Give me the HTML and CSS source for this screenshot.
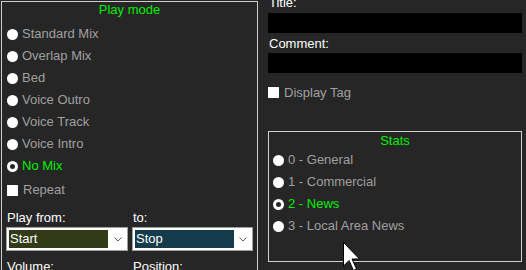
FILE: index.html
```html
<!DOCTYPE html>
<html lang="en">
<head>
    <meta charset="UTF-8">
    <meta name="viewport" content="width=device-width, initial-scale=1.0">
    <title>Cart properties</title>
    <link rel="stylesheet" href="styles.css">
</head>
<body>
    <div class="screen">
        <div class="group play-mode">
            <div class="group-title">Play mode</div>
            <div class="options">
                <div class="option"><span class="radio"></span>Standard Mix</div>
                <div class="option"><span class="radio"></span>Overlap Mix</div>
                <div class="option"><span class="radio"></span>Bed</div>
                <div class="option"><span class="radio"></span>Voice Outro</div>
                <div class="option"><span class="radio"></span>Voice Track</div>
                <div class="option"><span class="radio"></span>Voice Intro</div>
                <div class="option selected"><span class="radio"></span>No Mix</div>
            </div>
            <div class="option repeat"><span class="check"></span>Repeat</div>

            <div class="range">
                <div class="field first">
                    <div class="label">Play from:</div>
                    <div class="combo">
                        <span class="combo-value start">Start</span>
                        <span class="combo-arrow">
                            <svg width="8" height="5" viewBox="0 0 8 5"><polyline points="0.5,0.5 4,4 7.5,0.5" fill="none" stroke="#5a5a5a" stroke-width="1"/></svg>
                        </span>
                    </div>
                </div>
                <div class="field">
                    <div class="label">to:</div>
                    <div class="combo">
                        <span class="combo-value stop">Stop</span>
                        <span class="combo-arrow">
                            <svg width="8" height="5" viewBox="0 0 8 5"><polyline points="0.5,0.5 4,4 7.5,0.5" fill="none" stroke="#5a5a5a" stroke-width="1"/></svg>
                        </span>
                    </div>
                </div>
            </div>

            <div class="range lower">
                <div class="field first"><div class="label">Volume:</div></div>
                <div class="field"><div class="label">Position:</div></div>
            </div>
        </div>

        <div class="side">
            <div class="label">Title:</div>
            <div class="text-box"></div>
            <div class="label comment">Comment:</div>
            <div class="text-box"></div>
            <div class="option display-tag"><span class="check"></span>Display Tag</div>

            <div class="group stats">
                <div class="group-title">Stats</div>
                <div class="option"><span class="radio"></span>0 - General</div>
                <div class="option"><span class="radio"></span>1 - Commercial</div>
                <div class="option selected"><span class="radio"></span>2 - News</div>
                <div class="option"><span class="radio"></span>3 - Local Area News</div>
            </div>
        </div>

        <!-- mouse pointer -->
        <svg class="cursor" width="18" height="30" viewBox="0 0 18 30">
            <path d="M0.5 0.5 L0.5 24 L6 18.5 L10.5 28.5 L13.5 27 L9 17 L16.5 17 Z" fill="#ffffff" stroke="#000000" stroke-width="1"/>
        </svg>
    </div>
</body>
</html>
```

FILE: styles.css
```css
body {
    margin: 0;
    padding: 0;
    background-color: #262626;
    font-family: "Liberation Sans", Arial, Helvetica, sans-serif;
    font-size: 13px;
    color: #a0a0a0;
    overflow: hidden;
}
.screen {
    position: relative;
    box-sizing: border-box;
    display: flex;
    gap: 10px;
    padding: 1px 0 0 1px;
    height: 270px;
    overflow: hidden;
}
.group {
    box-sizing: border-box;
    border: 1px solid #cfcfcf;
}
.group-title {
    color: #00f000;
    text-align: center;
    line-height: 16px;
    height: 16px;
}
.play-mode {
    width: 257px;
    height: 300px;
    flex-shrink: 0;
}
.play-mode .group-title {
    margin-bottom: 5px;
}
.option {
    display: flex;
    align-items: center;
    height: 22px;
    line-height: 16px;
    white-space: nowrap;
}
.play-mode .option {
    padding-left: 5px;
}
.radio {
    box-sizing: border-box;
    width: 11px;
    height: 11px;
    border-radius: 50%;
    background-color: #ffffff;
    margin-right: 4px;
    flex-shrink: 0;
}
.selected {
    color: #00f000;
}
.selected .radio {
    border: 3px solid #ffffff;
    background-color: #262626;
}
.check {
    width: 11px;
    height: 11px;
    background-color: #ffffff;
    margin-right: 5px;
    flex-shrink: 0;
}
.option.repeat {
    margin-top: 2px;
}
.range {
    display: flex;
    gap: 4px;
    padding-left: 4px;
    margin-top: 9px;
}
.range.lower {
    margin-top: 8px;
}
.field {
    width: 121px;
}
.field.first {
    width: 122px;
}
.label {
    color: #ffffff;
    line-height: 15px;
    height: 15px;
    padding-left: 1px;
    margin-bottom: 2px;
    white-space: nowrap;
}
.combo {
    box-sizing: border-box;
    display: flex;
    height: 24px;
    padding: 2px;
    background-color: #ffffff;
    border: 1px solid #a0a0a0;
}
.combo-value {
    width: 99px;
    height: 18px;
    line-height: 18px;
    padding-left: 1px;
    box-sizing: border-box;
    color: #ffffff;
}
.combo-value.start {
    background-color: #313c16;
}
.combo-value.stop {
    background-color: #133b4b;
}
.combo-arrow {
    flex: 1;
    display: flex;
    align-items: center;
    justify-content: flex-end;
    padding-right: 3px;
}
.side {
    width: 254px;
    margin-top: -5px;
}
.side .label {
    line-height: 13px;
    height: 13px;
    margin-bottom: 4px;
}
.side .label.comment {
    margin-top: 4px;
    margin-bottom: 3px;
}
.text-box {
    height: 20px;
    background-color: #000000;
}
.option.display-tag {
    height: 21px;
    margin-top: 9px;
}
.stats {
    width: 254px;
    height: 131px;
    margin-top: 28px;
    padding-left: 4px;
}
.stats .group-title {
    height: 17px;
    line-height: 17px;
    margin-left: -4px;
}
.cursor {
    position: absolute;
    left: 343px;
    top: 242px;
}
```
